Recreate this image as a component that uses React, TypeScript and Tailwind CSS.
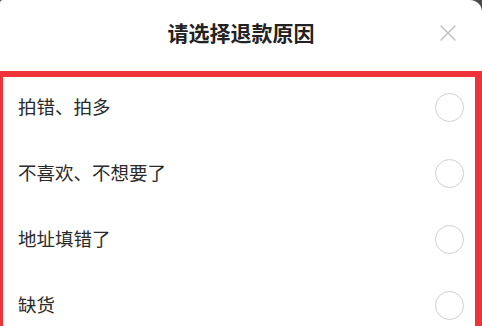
const reasons = ["拍错、拍多", "不喜欢、不想要了", "地址填错了", "缺货"];

export default function App() {
  return (
    <div className="w-[482px] h-[326px] overflow-hidden bg-[#4a4a4a]">
      <div
        className="h-full bg-white rounded-tr-[12px] rounded-tl-[3px]"
        style={{ fontFamily: '"Noto Sans CJK SC", "Noto Sans", sans-serif' }}
      >
        {/* Header */}
        <div className="relative h-[71px] flex items-center justify-center pb-[5px]">
          <h1 className="text-[21px] font-bold text-[#222]">请选择退款原因</h1>
          <svg
            className="absolute left-[440px] top-[25px]"
            width="16"
            height="16"
            viewBox="0 0 16 16"
            fill="none"
            stroke="#bdbdbd"
            strokeWidth="1.4"
            strokeLinecap="round"
          >
            <path d="M1 1L15 15M15 1L1 15" />
          </svg>
        </div>

        {/* Reason list */}
        <div className="border-t-[6px] border-l-[3px] border-r-[7px] border-[#ee3339] h-[255px]">
          {reasons.map((reason) => (
            <div
              key={reason}
              className="h-[66px] pb-[6px] flex items-center justify-between pl-[15px] pr-[11px]"
            >
              <span className="text-[18.5px] text-[#2a2a2a]">{reason}</span>
              <span className="w-[29px] h-[29px] rounded-full border-[1.5px] border-[#cfcfcf]" />
            </div>
          ))}
        </div>
      </div>
    </div>
  );
}
